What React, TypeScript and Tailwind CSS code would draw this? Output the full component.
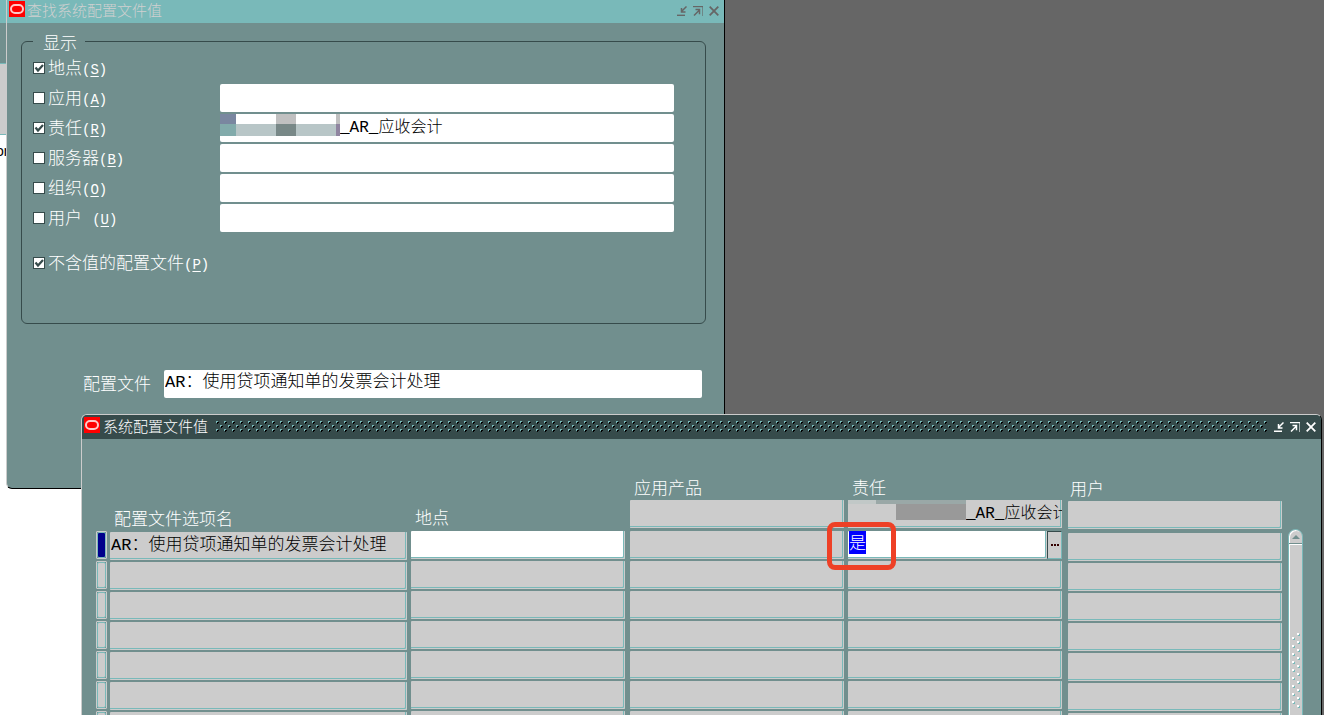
import { useEffect, useRef } from "react";

const levels = [
  { id: "site", label: "地点", key: "S", checked: true, field: false },
  { id: "app", label: "应用", key: "A", checked: false, field: true },
  { id: "resp", label: "责任", key: "R", checked: true, field: true, value: "_AR_应收会计" },
  { id: "server", label: "服务器", key: "B", checked: false, field: true },
  { id: "org", label: "组织", key: "O", checked: false, field: true },
  { id: "user", label: "用户 ", key: "U", checked: false, field: true },
];

const rows = [
  { name: "AR：使用贷项通知单的发票会计处理", resp: "是" },
  ...Array.from({ length: 9 }, () => ({ name: "", resp: "" })),
];

const bevel = "shadow-[inset_-1px_-1px_0_#cccccc,inset_-2px_-2px_0_#79b9b9]";
const cell = `block h-7 w-full rounded-[1px] px-px pb-2 leading-5 outline-none ${bevel}`;

function OracleMark() {
  return (
    <svg className="size-4 shrink-0" viewBox="0 0 16 16" aria-hidden="true">
      <rect width="16" height="16" fill="#ff0000" />
      <rect x="2" y="4" width="12" height="8" rx="4" fill="none" stroke="#ffc8c8" strokeWidth="2" />
    </svg>
  );
}

function WindowButtons() {
  return (
    <div className="flex shrink-0 gap-1.5">
      <button type="button" aria-label="最小化">
        <svg className="block size-2.5" viewBox="0 0 10 10" fill="none" stroke="currentColor">
          <path d="M0 9.3h8" strokeWidth="1.4" />
          <path d="M9.5.5 5 5M4.5 2v4h4" strokeWidth="1.5" />
        </svg>
      </button>
      <button type="button" aria-label="还原">
        <svg className="block size-2.5" viewBox="0 0 10 10" fill="none" stroke="currentColor">
          <path d="M0 .6h10" strokeWidth="1.2" />
          <path d="M9.5 1v9" opacity=".6" />
          <path d="M1 9.5 6 4.5M2.5 3.6h4v4.6" strokeWidth="1.5" />
        </svg>
      </button>
      <button type="button" aria-label="关闭">
        <svg className="block size-2.5" viewBox="0 0 10 10" fill="none" stroke="currentColor">
          <path d="m.7.7 8.6 8.6m0-8.6L.7 9.3" strokeWidth="1.8" />
        </svg>
      </button>
    </div>
  );
}

function GripDots() {
  return (
    <svg className="h-3 min-w-0 flex-1" aria-hidden="true">
      <defs>
        <pattern id="grip" width="8" height="8" patternUnits="userSpaceOnUse" shapeRendering="crispEdges">
          <path d="M1 1h2v1H2v1H1zM5 5h2v1H6v1H5z" fill="#000" />
          <path d="M0 0h2v1H1v1H0zM4 4h2v1H5v1H4z" fill="#79b9b9" />
        </pattern>
      </defs>
      <rect width="100%" height="100%" fill="url(#grip)" />
    </svg>
  );
}

function CheckOption({ id, label, mnemonic, checked }: { id: string; label: string; mnemonic: string; checked: boolean }) {
  return (
    <div className="flex w-[187px] shrink-0 items-center gap-[3px]">
      <span className="grid">
        <input
          id={id}
          type="checkbox"
          defaultChecked={checked}
          className="peer col-start-1 row-start-1 size-3 appearance-none border border-[#364b4b] bg-white"
        />
        <svg
          className="pointer-events-none invisible col-start-1 row-start-1 size-3 peer-checked:visible"
          viewBox="0 0 12 12"
          aria-hidden="true"
        >
          <path d="M2.5 5.5 5 8.5l5-5.5" fill="none" stroke="#364b4b" strokeWidth="2.2" />
        </svg>
      </span>
      <label htmlFor={id} className="pt-1 whitespace-pre text-white">
        {label}
        <span className="text-sm">
          (<u className="underline-offset-2">{mnemonic}</u>)
        </span>
      </label>
    </div>
  );
}

function FindWindow() {
  return (
    <section className="absolute top-0 left-[6px] w-[719px] rounded-b-md border-r border-b border-l border-r-black border-b-black border-l-[#cccccc] bg-[#718f8e]">
      <header className="flex h-[23px] items-start justify-between bg-[#79b9b9] pt-px pr-[5px] pl-0.5 text-[#666666]">
        <div className="flex gap-0.5">
          <OracleMark />
          <h2 className="text-[15px] leading-6 text-[#d0d0d0]">查找系统配置文件值</h2>
        </div>
        <div className="pt-[5px]">
          <WindowButtons />
        </div>
      </header>

      <form className="pt-1.5 pr-[18px] pb-[89px] pl-3.5">
        <fieldset className="rounded-md border border-[#364b4b] pr-[31px] pb-[45px] pl-[11px]">
          <legend className="pt-2 pr-2 pl-2.5 leading-4 text-white">显示</legend>
          {levels.map((level) => (
            <div key={level.id} className="flex h-[30px] items-center">
              <CheckOption id={level.id} label={level.label} mnemonic={level.key} checked={level.checked} />
              {level.field && (
                <div className="flex h-7 flex-1 items-start rounded-[2px] bg-white">
                  {level.value && (
                    <svg className="h-[22px] w-[120px] shrink-0" viewBox="0 0 120 22" shapeRendering="crispEdges" aria-hidden="true">
                      <path d="M0 0h16v10H0z" fill="#7a87a0" />
                      <path d="M56 0h20v10H56zM116 0h4v10h-4z" fill="#c0c0c0" />
                      <path d="M0 10h16v12H0z" fill="#82abab" />
                      <path d="M16 10h100v12H16z" fill="#b8c6c7" />
                      <path d="M56 10h20v12H56z" fill="#788887" />
                      <path d="M116 10h4v12h-4z" fill="#9085a0" />
                    </svg>
                  )}
                  <input
                    aria-label={level.label.trim()}
                    defaultValue={level.value}
                    className="h-7 w-full min-w-0 bg-transparent text-base leading-7 outline-none"
                  />
                </div>
              )}
            </div>
          ))}
          <div className="mt-[15px] flex h-[30px] items-center">
            <CheckOption id="empty" label="不含值的配置文件" mnemonic="P" checked />
          </div>
        </fieldset>

        <div className="mt-[45px] flex items-center pr-1 pl-[62px]">
          <label htmlFor="profile" className="w-[81px] shrink-0 pt-1 text-white">
            配置文件
          </label>
          <input
            id="profile"
            defaultValue="AR：使用贷项通知单的发票会计处理"
            className="h-7 min-w-0 flex-1 rounded-[2px] bg-white px-px pb-2 leading-5 outline-none"
          />
        </div>
      </form>
    </section>
  );
}

function ScrollBar() {
  return (
    <div className="mt-[53px] ml-0.5 w-[15px] shrink-0 rounded-t-lg border border-[#79b9b9] bg-[#cccccc] shadow-[inset_1px_1px_0_#ffffff]">
      <button type="button" aria-label="向上滚动" className="flex h-3.5 w-full items-center justify-center border-b border-[#718f8e]">
        <svg className="h-1 w-2" viewBox="0 0 8 4" aria-hidden="true">
          <path d="M4 0 8 4H0z" fill="#718f8e" />
        </svg>
      </button>
      <div className="h-px bg-white" />
      <svg className="mt-[88px] ml-[3px] block h-[76px] w-2" aria-hidden="true">
        <defs>
          <pattern id="thumb" width="8" height="8" patternUnits="userSpaceOnUse" shapeRendering="crispEdges">
            <path d="M6 1h2v2H6zM1 5h2v2H1z" fill="#79b9b9" />
            <path d="M5 0h2v2H5zM0 4h2v2H0z" fill="#fff" />
          </pattern>
        </defs>
        <rect width="8" height="76" fill="url(#thumb)" />
      </svg>
    </div>
  );
}

function ValuesWindow() {
  const active = useRef<HTMLInputElement>(null);

  useEffect(() => {
    active.current?.focus({ preventScroll: true });
    active.current?.select();
  }, []);

  return (
    <section className="absolute top-[414px] right-[2px] left-[81px] overflow-hidden rounded-t-md border border-[#cccccc] border-r-black bg-[#718f8e]">
      <header className="flex h-6 items-center bg-[#364b4b] pr-[5px] pl-0.5 text-white">
        <div className="flex h-5 items-start gap-[3px]">
          <OracleMark />
          <h2 className="text-[15px] leading-6">系统配置文件值</h2>
        </div>
        <div className="ml-2 flex min-w-0 flex-1 items-center gap-1.5">
          <GripDots />
          <WindowButtons />
        </div>
      </header>

      <div className="flex pt-[37px] pr-[18px] pb-8 pl-3.5">
        <table className="w-full table-fixed border-collapse text-left">
          <colgroup>
            <col className="w-[14px]" />
            <col className="w-[301px]" />
            <col className="w-[219px]" />
            <col className="w-[218px]" />
            <col className="w-[220px]" />
            <col className="w-[218px]" />
          </colgroup>
          <thead>
            <tr className="align-bottom leading-5 text-white">
              <td />
              <th className="p-0 pl-1 font-light">配置文件选项名</th>
              <th className="p-0 pb-px pl-1 font-light">地点</th>
              <th className="p-0 pr-1 pb-[3px] font-light">
                <label htmlFor="h-app" className="block pt-1 pl-1">应用产品</label>
                <input id="h-app" className={`${cell} bg-[#cccccc]`} />
              </th>
              <th className="p-0 pr-1.5 pb-[3px] font-light">
                <label htmlFor="h-resp" className="block pt-1 pl-1">责任</label>
                <div className={`flex h-7 items-start overflow-hidden bg-[#cccccc] ${bevel}`}>
                  <svg className="h-5 w-[118px] shrink-0" viewBox="0 0 118 20" shapeRendering="crispEdges" aria-hidden="true">
                    <path d="M0 0h28v4H0z" fill="#c1c8c7" />
                    <path d="M28 0h90v4H28z" fill="#9aa8a7" />
                    <path d="M48 4h70v16H48z" fill="#999999" />
                  </svg>
                  <input
                    id="h-resp"
                    defaultValue="_AR_应收会计"
                    className="h-7 w-full min-w-0 bg-transparent text-base leading-7 text-black outline-none"
                  />
                </div>
              </th>
              <th className="p-0 pr-1 pb-0.5 font-light">
                <label htmlFor="h-user" className="block pt-1 pl-0.5">用户</label>
                <input id="h-user" className={`${cell} bg-[#cccccc]`} />
              </th>
            </tr>
          </thead>
          <tbody>
            {rows.map((row, i) => (
              <tr key={i} className="h-[30px] align-top">
                <td className="p-0 pr-[3px]">
                  <div className="h-7 rounded-[1px] border border-[#cccccc]">
                    <div className={`h-full rounded-[2px] border border-[#79b9b9] ${i === 0 ? "bg-[#00008b]" : "bg-[#cccccc]"}`} />
                  </div>
                </td>
                <td className="p-0 pt-px pr-1">
                  <input aria-label="配置文件选项名" defaultValue={row.name} className={`${cell} bg-[#cccccc]`} />
                </td>
                <td className="p-0 pr-[5px]">
                  <input aria-label="地点" className={`${cell} ${i === 0 ? "bg-white" : "bg-[#cccccc]"}`} />
                </td>
                <td className="p-0 pr-1">
                  <input aria-label="应用产品" className={`${cell} bg-[#cccccc]`} />
                </td>
                <td className="p-0 pr-1.5">
                  {i === 0 ? (
                    <div className="relative flex">
                      <input
                        ref={active}
                        aria-label="责任"
                        defaultValue={row.resp}
                        className={`${cell} min-w-0 flex-1 bg-white selection:bg-[#0000ff] selection:text-white`}
                      />
                      <button
                        type="button"
                        aria-label="值列表"
                        className="flex h-7 w-[15px] items-center justify-center border-t border-r border-b border-l border-t-[#364b4b] border-r-[#79b9b9] border-b-[#79b9b9] border-l-[#364b4b] bg-[#cccccc]"
                      >
                        <svg className="h-0.5 w-2" viewBox="0 0 8 2" shapeRendering="crispEdges" aria-hidden="true">
                          <path d="M0 0h2v2H0zM3 0h2v2H3zM6 0h2v2H6z" fill="#330000" />
                        </svg>
                      </button>
                      <span className="pointer-events-none absolute -top-[9px] -left-[21px] h-12 w-[69px] rounded-lg border-[5px] border-[#ee4026]" />
                    </div>
                  ) : (
                    <input aria-label="责任" className={`${cell} bg-[#cccccc]`} />
                  )}
                </td>
                <td className="p-0 pt-0.5 pr-1">
                  <input aria-label="用户" className={`${cell} bg-[#cccccc]`} />
                </td>
              </tr>
            ))}
          </tbody>
        </table>
        <ScrollBar />
      </div>
    </section>
  );
}

export default function App() {
  return (
    <main className="relative h-screen overflow-hidden bg-[#666666] font-['Liberation_Mono','Noto_Sans_CJK_SC',monospace] text-[17px] font-light">
      {/* browser edge left visible behind the form windows */}
      <div className="flex h-full w-[82px] flex-col bg-white">
        <div className="h-[23px] bg-[#79b9b9]" />
        <div className="h-[41px] border-b border-[#79b9b9] bg-[#718f8e]" />
        <div className="h-[71px] border-b border-[#79b9b9] bg-[#cccccc]" />
        <p className="-ml-1 pt-1.5 font-['Liberation_Sans',sans-serif] text-sm leading-5">or</p>
      </div>
      <FindWindow />
      <ValuesWindow />
    </main>
  );
}
